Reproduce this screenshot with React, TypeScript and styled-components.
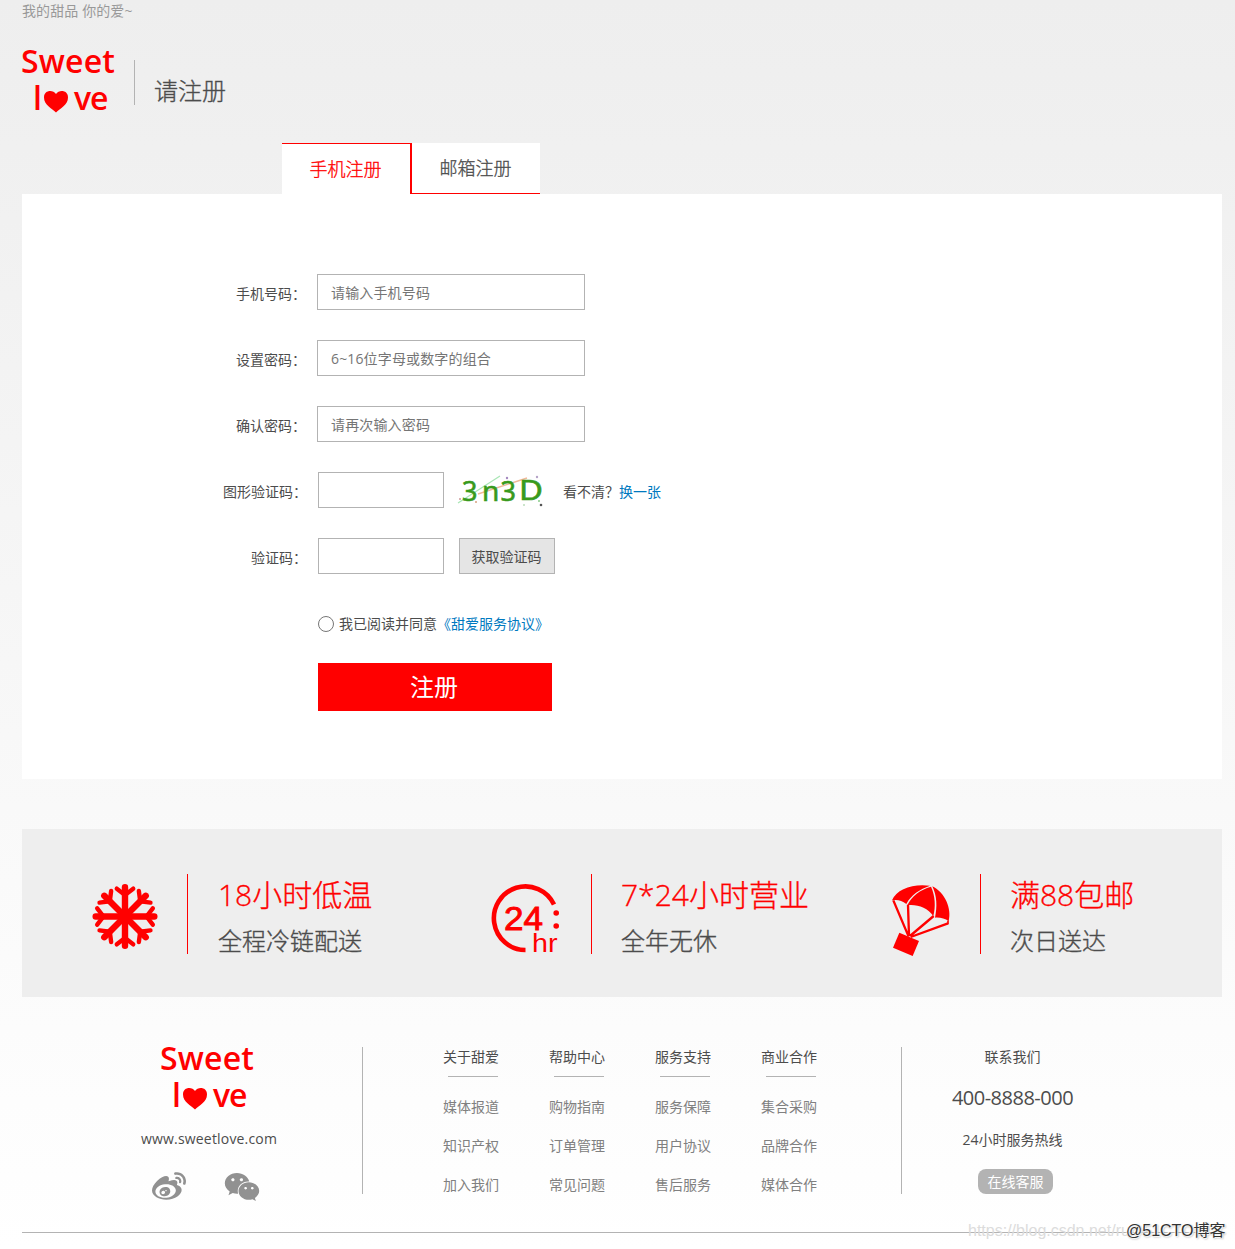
import React from "react";
import styled, { createGlobalStyle } from "styled-components";
import { FaWeibo, FaWeixin } from "react-icons/fa";

const GlobalStyle = createGlobalStyle`
  * { box-sizing: border-box; }
  body {
    margin: 0;
    font: 14px/20px "Open Sans", "Noto Sans CJK SC", sans-serif;
    color: #4c4c4c;
  }
  ul, h1, h2, h3, p { margin: 0; padding: 0; font-size: inherit; font-weight: inherit; list-style: none; }
`;

const Page = styled.div`
  position: relative;
  height: 1249px;
  overflow: hidden;
  padding-left: 22px;
  background: linear-gradient(#eeeeee, #ffffff);
`;
const Container = styled.div`
  width: 1200px;
`;
const TopBar = styled.div`
  height: 22px;
  line-height: 22px;
  letter-spacing: 0.1px;
  color: #999;
`;
const Header = styled.header`
  display: flex;
  align-items: flex-start;
  height: 121px;
  padding-top: 26px;
`;
const LogoSvg = styled.svg`
  display: block;
  width: 96px;
  height: 66px;
  overflow: visible;
  font-family: "Open Sans", sans-serif;
  font-size: 32px;
  font-weight: 600;
  fill: #f00;
`;
const HeaderTitle = styled.h1`
  height: 45px;
  margin: 12px 0 0 16px;
  padding: 16px 0 0 19px;
  border-left: 1px solid #b3b3b3;
  font-size: 24px;
  font-weight: 300;
  line-height: 30px;
  -webkit-text-stroke: 0.35px;
`;
const Tabs = styled.div`
  display: flex;
  height: 51px;
  margin-left: 260px;
`;
const Tab = styled.div<{ $active?: boolean }>`
  width: ${(p) => (p.$active ? 130 : 128)}px;
  padding-right: 1px;
  border: solid #f00;
  border-width: ${(p) => (p.$active ? "1px 2px 0 0" : "0 0 1px 0")};
  background: #fff;
  color: ${(p) => (p.$active ? "#f00" : "#4c4c4c")};
  font-size: 18px;
  font-weight: 300;
  line-height: 50px;
  text-align: center;
  -webkit-text-stroke: 0.3px;
`;
const Panel = styled.form`
  display: flex;
  flex-direction: column;
  height: 585px;
  padding: 80px 0 0 196px;
  background: #fff;
`;
const Row = styled.div`
  display: flex;
  align-items: center;
  height: 36px;
  margin-bottom: 30px;
`;
const Label = styled.label<{ $wide?: boolean }>`
  width: ${(p) => (p.$wide ? 89 : 88)}px;
  margin-right: 11px;
  padding-top: 3px;
  text-align: right;
`;
const Input = styled.input<{ $short?: boolean }>`
  width: ${(p) => (p.$short ? 126 : 268)}px;
  height: 36px;
  padding: 0 13px;
  border: 1px solid #b3b3b3;
  border-radius: 0;
  outline: 0;
  background: #fff;
  font: inherit;
  letter-spacing: 0.15px;
  &::placeholder { color: #757575; }
`;
const Captcha = styled.svg`
  width: 90px;
  height: 34px;
  margin: 2px 15px 0 14px;
  overflow: visible;
  font-family: "Noto Sans", sans-serif;
  font-weight: 400;
`;
const Link = styled.a`
  color: #0079bf;
`;
const Hint = styled.span`
  padding-top: 3px;
`;
const CodeButton = styled.button`
  width: 96px;
  height: 36px;
  margin-left: 15px;
  padding: 2px 1px 0 0;
  border: 1px solid #b3b3b3;
  background: #e5e5e5;
  color: #4c4c4c;
  font: inherit;
`;
const Agreement = styled.div`
  display: flex;
  align-items: center;
  height: 20px;
  margin: 10px 0 29px 100px;
`;
const Radio = styled.span`
  width: 16px;
  height: 16px;
  margin-right: 5px;
  border: 1px solid #767676;
  border-radius: 50%;
`;
const Submit = styled.button`
  width: 234px;
  height: 48px;
  margin-left: 100px;
  padding: 0 2px 0 0;
  border: 0;
  background: #f00;
  color: #fff;
  font: inherit;
  font-size: 24px;
`;
const Features = styled.section`
  display: grid;
  grid-template-columns: 400px 400px 400px;
  height: 168px;
  margin-top: 50px;
  padding-top: 45px;
  background: #eee;
`;
const Feature = styled.div`
  display: flex;
  height: 80px;
`;
const FeatureIcon = styled.svg`
  display: block;
  width: 74px;
  height: 84px;
  margin-left: 66px;
  flex: none;
`;
const FeatureText = styled.div<{ $gap: number; $inset: number }>`
  height: 80px;
  margin-left: ${(p) => p.$gap}px;
  padding-left: ${(p) => p.$inset}px;
  border-left: 1px solid #f00;
  font-weight: 300;
  -webkit-text-stroke: 0.35px;
`;
const FeatureTitle = styled.h2`
  color: #f00;
  font-size: 30px;
  line-height: 42px;
  white-space: nowrap;
`;
const FeatureSub = styled.p`
  padding-top: 1px;
  font-size: 24px;
  line-height: 48px;
`;
const Footer = styled.footer`
  display: flex;
  height: 236px;
  padding-top: 50px;
  border-bottom: 1px solid #b3b3b3;
`;
const Brand = styled.div`
  display: flex;
  flex-direction: column;
  width: 341px;
  height: 147px;
  padding-left: 139px;
  border-right: 1px solid #b3b3b3;
`;
const BrandLogo = styled.div`
  height: 64px;
  margin-top: -2px;
`;
const Site = styled.p`
  margin: 20px 0 0 -20px;
  letter-spacing: 0.18px;
`;
const Socials = styled.div`
  display: flex;
  align-items: center;
  gap: 38px;
  margin: 20px 0 0 -9px;
  color: #919191;
`;
const Columns = styled.div`
  display: flex;
  width: 539px;
  height: 147px;
  padding-left: 80px;
  gap: 50px;
  border-right: 1px solid #b3b3b3;
`;
const Column = styled.div`
  width: 56px;
`;
const ColumnHead = styled.h3`
  height: 20px;
`;
const Rule = styled.div`
  width: 50px;
  height: 1px;
  margin: 9px 0 10px 5px;
  background: #b3b3b3;
`;
const ColumnItem = styled.li`
  height: 39px;
  line-height: 39px;
  color: #808080;
`;
const Contact = styled.div`
  display: flex;
  flex-direction: column;
  align-items: center;
  width: 221px;
`;
const Phone = styled.p`
  margin: 16px 0 17px;
  font-size: 20px;
  line-height: 30px;
  letter-spacing: -0.5px;
`;
const ServiceButton = styled.button`
  width: 75px;
  height: 25px;
  margin: 19px 0 0 6px;
  padding: 0;
  border: 0;
  border-radius: 8px;
  background: #b3b3b3;
  color: #fff;
  font: inherit;
`;
const UrlMark = styled.div`
  position: absolute;
  left: 968px;
  top: 1221px;
  color: #dcdcdc;
  font: 16px/20px "Liberation Sans", sans-serif;
  white-space: nowrap;
`;
const BlogMark = styled.div`
  position: absolute;
  left: 1126px;
  top: 1221px;
  color: #333;
  font: 16px/20px "Liberation Sans", "Noto Sans CJK SC", sans-serif;
  text-shadow: 1px 1px 1px #fff, -1px -1px 1px #fff, 1px 1px 2px #888;
  white-space: nowrap;
`;

const Logo = () => (
  <LogoSvg viewBox="0 0 96 66">
    <text x="-1" y="25" textLength="94" lengthAdjust="spacing">Sweet</text>
    <text x="11" y="62">l</text>
    <text x="52" y="62" textLength="34.5">ve</text>
    <path d="M34 64.5 C30 60.5 22 57 22 49.5 C22 42 31 41.5 34 46 C37 41.5 46 42 46 49.5 C46 57 38 60.5 34 64.5Z" />
  </LogoSvg>
);

const Snowflake = () => (
  <FeatureIcon viewBox="88 874 74 84" fill="none" stroke="#f00" strokeLinecap="round" strokeLinejoin="round">
    {[0, 45, 90, 135, 180, 225, 270, 315].map((angle) => (
      <g key={angle} transform={`translate(125 916.5) rotate(${angle})`}>
        <path strokeWidth="6.4" d="M0 0V-29.3" />
        <path strokeWidth="4.4" d="M-8.2 -27.8L0 -21.5L8.2 -27.8" />
      </g>
    ))}
  </FeatureIcon>
);

const AllDay = () => (
  <FeatureIcon viewBox="488 874 74 84" fill="#f00" fontFamily="Liberation Sans, sans-serif">
    <path d="M525.5 950A31.6 31.8 0 1 1 554 904.5" fill="none" stroke="#f00" strokeWidth="4.6" />
    <text x="504" y="930" fontSize="33.5" stroke="#f00" strokeWidth=".9" textLength="39" lengthAdjust="spacingAndGlyphs">24</text>
    <text x="532" y="952" fontSize="26.5" textLength="25.5" lengthAdjust="spacingAndGlyphs">hr</text>
    <circle cx="556.2" cy="913" r="2.8" />
    <circle cx="556.2" cy="926" r="2.8" />
  </FeatureIcon>
);

const Parachute = () => (
  <FeatureIcon viewBox="54 42 222 252" fill="#f00">
    <path d="M66 121C80 86 130 70 180 77C150 87 122 105 109 132C95 120 80 118 66 121Z" />
    <path d="M112 136C125 107 150 90 183 80C196 108 197 140 190 168C173 143 140 132 112 136Z" />
    <path d="M187 79C225 98 246 145 236 184C225 175 210 172 195 173C202 140 201 108 187 79Z" />
    <path d="M70 121L116 230M114 134L117 228M191 168L120 228M234 190L122 231" fill="none" stroke="#f00" strokeWidth="7" />
    <path d="M234 182V193" stroke="#f00" strokeWidth="5" />
    <path d="M88 218L147 243L128 288L69 263Z" />
  </FeatureIcon>
);

const fields = [
  ["手机号码：", "请输入手机号码"],
  ["设置密码：", "6~16位字母或数字的组合"],
  ["确认密码：", "请再次输入密码"],
];

const features = [
  { icon: <Snowflake />, gap: 25, inset: 30, title: "18小时低温", sub: "全程冷链配送" },
  { icon: <AllDay />, gap: 29, inset: 29, title: "7*24小时营业", sub: "全年无休" },
  { icon: <Parachute />, gap: 18, inset: 29, title: "满88包邮", sub: "次日送达" },
];

const columns = [
  ["关于甜爱", "媒体报道", "知识产权", "加入我们"],
  ["帮助中心", "购物指南", "订单管理", "常见问题"],
  ["服务支持", "服务保障", "用户协议", "售后服务"],
  ["商业合作", "集合采购", "品牌合作", "媒体合作"],
];

export default function App() {
  return (
    <Page>
      <GlobalStyle />
      <Container>
        <TopBar>我的甜品 你的爱~</TopBar>
        <Header>
          <Logo />
          <HeaderTitle>请注册</HeaderTitle>
        </Header>
        <Tabs>
          <Tab $active>手机注册</Tab>
          <Tab>邮箱注册</Tab>
        </Tabs>
        <Panel>
          {fields.map(([label, hint]) => (
            <Row key={label}>
              <Label>{label}</Label>
              <Input placeholder={hint} />
            </Row>
          ))}
          <Row>
            <Label $wide>图形验证码：</Label>
            <Input $short />
            <Captcha viewBox="458 475 90 34" fill="#389a1c" stroke="#389a1c" strokeWidth=".6">
              <path d="M458 504L500 477" stroke="#a8e6b4" strokeWidth="1.2" />
              <path d="M478 495L527 479" stroke="#f0b99a" strokeWidth="1.4" />
              <text x="462" y="501.5" fontSize="27">3</text>
              <text x="482" y="502" fontSize="28">n</text>
              <text x="500.5" y="502" fontSize="27">3</text>
              <text x="519" y="501" fontSize="27" textLength="24" lengthAdjust="spacingAndGlyphs">D</text>
              <g stroke="none">
                <circle cx="507" cy="479" r="1.2" fill="#a58ac0" />
                <circle cx="537" cy="478" r="1.2" fill="#b5a3c8" />
                <circle cx="541" cy="506" r="1.3" fill="#555" />
                <circle cx="476" cy="503" r="1" fill="#d8a080" />
                <circle cx="460" cy="500" r="1" fill="#c99" />
                <circle cx="524" cy="506" r="1" fill="#bdb" />
                <circle cx="539" cy="502" r="1" fill="#8c8" />
              </g>
            </Captcha>
            <Hint>看不清？<Link>换一张</Link></Hint>
          </Row>
          <Row>
            <Label $wide>验证码：</Label>
            <Input $short />
            <CodeButton type="button">获取验证码</CodeButton>
          </Row>
          <Agreement>
            <Radio />
            我已阅读并同意<Link>《甜爱服务协议》</Link>
          </Agreement>
          <Submit type="button">注册</Submit>
        </Panel>
        <Features>
          {features.map((f) => (
            <Feature key={f.title}>
              {f.icon}
              <FeatureText $gap={f.gap} $inset={f.inset}>
                <FeatureTitle>{f.title}</FeatureTitle>
                <FeatureSub>{f.sub}</FeatureSub>
              </FeatureText>
            </Feature>
          ))}
        </Features>
        <Footer>
          <Brand>
            <BrandLogo><Logo /></BrandLogo>
            <Site>www.sweetlove.com</Site>
            <Socials>
              <FaWeibo size={34} />
              <FaWeixin size={36} />
            </Socials>
          </Brand>
          <Columns>
            {columns.map(([head, ...items]) => (
              <Column key={head}>
                <ColumnHead>{head}</ColumnHead>
                <Rule />
                <ul>
                  {items.map((item) => (
                    <ColumnItem key={item}>{item}</ColumnItem>
                  ))}
                </ul>
              </Column>
            ))}
          </Columns>
          <Contact>
            <p>联系我们</p>
            <Phone>400-8888-000</Phone>
            <p>24小时服务热线</p>
            <ServiceButton type="button">在线客服</ServiceButton>
          </Contact>
        </Footer>
      </Container>
      <UrlMark>https://blog.csdn.net/ru</UrlMark>
      <BlogMark>@51CTO博客</BlogMark>
    </Page>
  );
}
